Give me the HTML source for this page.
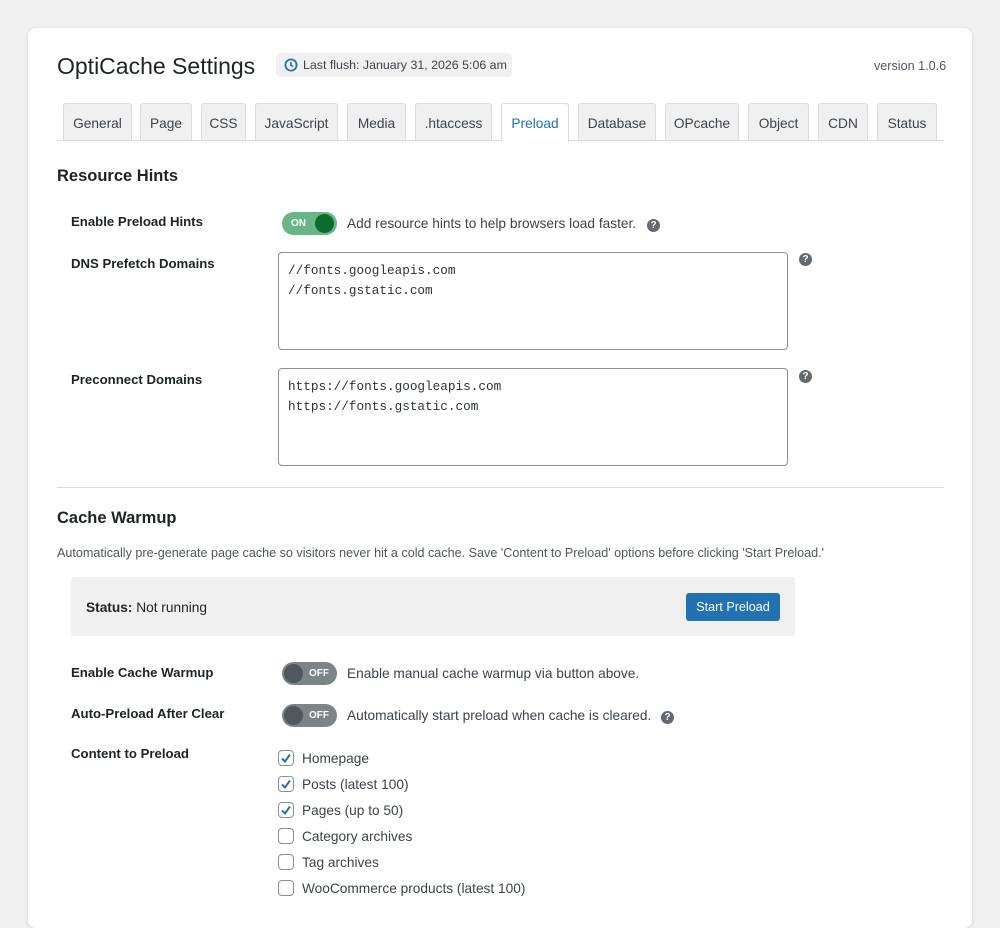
<!DOCTYPE html>
<html><head><meta charset="utf-8"><style>
body{margin:0;width:1000px;height:900px;background:#f0f0f1;font-family:"Liberation Sans",sans-serif;color:#1d2327;overflow:hidden;position:relative}
.card{position:absolute;left:28px;top:28px;width:944px;height:900px;background:#fff;border-radius:8px;box-shadow:0 1px 4px rgba(0,0,0,.12)}
.a{position:absolute;white-space:nowrap}
.tab{position:absolute;top:103px;height:37px;background:#f0f0f1;border:1px solid #dcdcde;border-bottom:none;border-radius:3px 3px 0 0;font-size:13.7px;color:#3c434a;text-align:center;line-height:40px;box-sizing:border-box}
.tab.act{background:#fff;color:#2271b1;height:39px}
.lbl{font-size:13.2px;font-weight:bold;color:#1d2327;left:71px}
.txt{font-size:13.7px;color:#3c434a}
.tog{position:absolute;width:55px;height:23px;border-radius:12px}
.ta{position:absolute;left:278px;width:510px;height:98px;border:1px solid #8c8f94;border-radius:4px;box-sizing:border-box;font-family:"Liberation Mono",monospace;font-size:12.7px;line-height:20px;padding:8px 9px;color:#2c3338}
.q{position:absolute;width:13px;height:13px;border-radius:50%;background:#646970;color:#fff;font-size:10px;font-weight:bold;text-align:center;line-height:13px}
.cb{position:absolute;left:278px;width:16px;height:16px;border:1px solid #8c8f94;border-radius:4px;box-sizing:border-box}
.cl{left:302px;font-size:13.7px;color:#3c434a}
</style></head><body>
<div class="card"></div>
<div class="a" style="left:57px;top:53px;font-size:23px;color:#1d2327">OptiCache Settings</div>
<div class="a" style="left:276px;top:53px;width:236px;height:24px;background:#f0f0f1;border-radius:4px"></div>
<svg class="a" style="left:284px;top:58px" width="14" height="14" viewBox="0 0 14 14"><circle cx="7" cy="7" r="5.6" fill="none" stroke="#2271b1" stroke-width="1.8"/><path d="M7 4v3.3l2 1.3" fill="none" stroke="#2271b1" stroke-width="1.6"/></svg>
<div class="a" style="left:303px;top:58px;font-size:12.4px;color:#3c434a">Last flush: January 31, 2026 5:06 am</div>
<div class="a" style="left:874px;top:59px;font-size:12.6px;color:#50575e">version 1.0.6</div>
<div class="a" style="left:57px;top:140px;width:887px;height:1px;background:#dcdcde"></div>
<div class="tab" style="left:63px;width:69px">General</div>
<div class="tab" style="left:140px;width:52px">Page</div>
<div class="tab" style="left:201px;width:45px">CSS</div>
<div class="tab" style="left:255px;width:83px">JavaScript</div>
<div class="tab" style="left:347px;width:59px">Media</div>
<div class="tab" style="left:415px;width:77px">.htaccess</div>
<div class="tab act" style="left:501px;width:68px">Preload</div>
<div class="tab" style="left:578px;width:78px">Database</div>
<div class="tab" style="left:665px;width:74px">OPcache</div>
<div class="tab" style="left:748px;width:61px">Object</div>
<div class="tab" style="left:818px;width:50px">CDN</div>
<div class="tab" style="left:877px;width:60px">Status</div>

<div class="a" style="left:57px;top:167px;font-size:16.5px;font-weight:bold">Resource Hints</div>
<div class="a lbl" style="top:214px">Enable Preload Hints</div>
<div class="tog" style="left:282px;top:212px;background:#68b686"></div>
<div class="a" style="left:291px;top:218px;font-size:10px;font-weight:bold;color:#fff">ON</div>
<div class="a" style="left:315px;top:214px;width:19px;height:19px;border-radius:50%;background:#0a6b2f"></div>
<div class="a txt" style="left:347px;top:216px">Add resource hints to help browsers load faster.</div>
<div class="q" style="left:647px;top:219px">?</div>

<div class="a lbl" style="top:256px">DNS Prefetch Domains</div>
<div class="ta" style="top:252px">//fonts.googleapis.com<br>//fonts.gstatic.com</div>
<div class="q" style="left:799px;top:253px">?</div>
<div class="a lbl" style="top:372px">Preconnect Domains</div>
<div class="ta" style="top:368px">https://fonts.googleapis.com<br>https://fonts.gstatic.com</div>
<div class="q" style="left:799px;top:370px">?</div>

<div class="a" style="left:57px;top:487px;width:887px;height:1px;background:#dcdcde"></div>
<div class="a" style="left:57px;top:509px;font-size:16.5px;font-weight:bold">Cache Warmup</div>
<div class="a" style="left:57px;top:546px;font-size:12.6px;color:#50575e">Automatically pre-generate page cache so visitors never hit a cold cache. Save 'Content to Preload' options before clicking 'Start Preload.'</div>
<div class="a" style="left:71px;top:577px;width:724px;height:59px;background:#f0f0f1;border-radius:3px"></div>
<div class="a txt" style="left:86px;top:600px;color:#1d2327"><b>Status:</b> Not running</div>
<div class="a" style="left:686px;top:593px;width:94px;height:28px;background:#2271b1;border-radius:3px;color:#fff;font-size:12.6px;text-align:center;line-height:28px">Start Preload</div>

<div class="a lbl" style="top:665px">Enable Cache Warmup</div>
<div class="tog" style="left:282px;top:662px;background:#7b8487"></div>
<div class="a" style="left:284px;top:664px;width:19px;height:19px;border-radius:50%;background:#50575e"></div>
<div class="a" style="left:309px;top:668px;font-size:10px;font-weight:bold;color:#fff">OFF</div>
<div class="a txt" style="left:347px;top:666px">Enable manual cache warmup via button above.</div>
<div class="a lbl" style="top:706px">Auto-Preload After Clear</div>
<div class="tog" style="left:282px;top:704px;background:#7b8487"></div>
<div class="a" style="left:284px;top:706px;width:19px;height:19px;border-radius:50%;background:#50575e"></div>
<div class="a" style="left:309px;top:710px;font-size:10px;font-weight:bold;color:#fff">OFF</div>
<div class="a txt" style="left:347px;top:708px">Automatically start preload when cache is cleared.</div>
<div class="q" style="left:661px;top:711px">?</div>

<div class="a lbl" style="top:746px">Content to Preload</div>
<div class="cb" style="top:750px"></div><svg class="a" style="left:280px;top:752px" width="12" height="12"><path d="M2 6.5l3 3 5-7" fill="none" stroke="#2271b1" stroke-width="2"/></svg><div class="a cl" style="top:751px">Homepage</div>
<div class="cb" style="top:776px"></div><svg class="a" style="left:280px;top:778px" width="12" height="12"><path d="M2 6.5l3 3 5-7" fill="none" stroke="#2271b1" stroke-width="2"/></svg><div class="a cl" style="top:777px">Posts (latest 100)</div>
<div class="cb" style="top:802px"></div><svg class="a" style="left:280px;top:804px" width="12" height="12"><path d="M2 6.5l3 3 5-7" fill="none" stroke="#2271b1" stroke-width="2"/></svg><div class="a cl" style="top:803px">Pages (up to 50)</div>
<div class="cb" style="top:828px"></div><div class="a cl" style="top:829px">Category archives</div>
<div class="cb" style="top:854px"></div><div class="a cl" style="top:855px">Tag archives</div>
<div class="cb" style="top:880px"></div><div class="a cl" style="top:881px">WooCommerce products (latest 100)</div>
</body></html>
